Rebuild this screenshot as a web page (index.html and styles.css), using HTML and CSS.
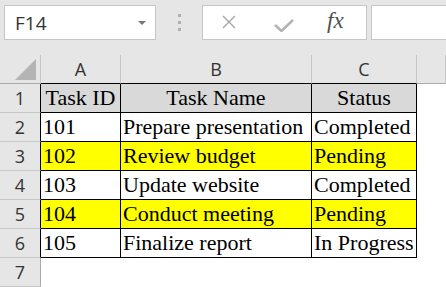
FILE: index.html
```html
<!DOCTYPE html>
<html>
<head lang="en">
    <meta charset="UTF-8">
    <title>Tasks</title>
    <link rel="stylesheet" href="styles.css">
</head>
<body>
<div class="toolbar">
    <div class="namebox">
        <span class="ref">F14</span>
        <span class="caret"></span>
    </div>
    <div class="grip"><i></i><i></i><i></i></div>
    <div class="fbuttons">
        <svg class="cancel" width="14" height="14" viewBox="0 0 14 14">
            <path d="M1 1L13 13M13 1L1 13" />
        </svg>
        <svg class="enter" width="20" height="13" viewBox="0 0 20 13">
            <path d="M1 6L7.5 12L19 1" />
        </svg>
        <span class="fx">fx</span>
    </div>
    <div class="fbox"></div>
</div>
<div class="sheet">
    <!-- column letters -->
    <div class="corner"><span class="tri"></span></div>
    <div class="colhead in">A</div>
    <div class="colhead in">B</div>
    <div class="colhead in">C</div>
    <div class="colhead"></div>

    <div class="rowhead in">1</div>
    <div class="cell th">Task ID</div>
    <div class="cell th">Task Name</div>
    <div class="cell th">Status</div>
    <div class="blank"></div>

    <div class="rowhead in">2</div>
    <div class="cell">101</div>
    <div class="cell">Prepare presentation</div>
    <div class="cell">Completed</div>
    <div class="blank"></div>

    <div class="rowhead in">3</div>
    <div class="cell hl">102</div>
    <div class="cell hl">Review budget</div>
    <div class="cell hl">Pending</div>
    <div class="blank"></div>

    <div class="rowhead in">4</div>
    <div class="cell">103</div>
    <div class="cell">Update website</div>
    <div class="cell">Completed</div>
    <div class="blank"></div>

    <div class="rowhead in">5</div>
    <div class="cell hl">104</div>
    <div class="cell hl">Conduct meeting</div>
    <div class="cell hl">Pending</div>
    <div class="blank"></div>

    <div class="rowhead in">6</div>
    <div class="cell">105</div>
    <div class="cell">Finalize report</div>
    <div class="cell">In Progress</div>
    <div class="blank"></div>

    <div class="rowhead">7</div>
    <div class="blank"></div>
    <div class="blank"></div>
    <div class="blank"></div>
    <div class="blank"></div>
</div>
</body>
</html>
```
FILE: styles.css
```css
*{
    margin:0;
    padding:0;
    box-sizing:border-box;
}
body{
    background:#fff;
    font-family:"Open Sans","Liberation Sans",sans-serif;
    overflow:hidden;
}
/* formula bar */
.toolbar{
    height:55px;
    background:#e6e6e6;
    display:flex;
    align-items:flex-start;
    padding:5px 0 0 4px;
}
.namebox{
    width:152px;
    height:35px;
    background:#fff;
    border:1px solid #c6c6c6;
    display:flex;
    align-items:center;
    justify-content:space-between;
    padding:0 9px 0 10px;
}
.ref{
    font-size:19px;
    color:#333;
}
.caret{
    width:0;
    height:0;
    border-left:4px solid transparent;
    border-right:4px solid transparent;
    border-top:4px solid #777;
    margin-top:1px;
}
.grip{
    width:46px;
    height:35px;
    display:flex;
    flex-direction:column;
    align-items:center;
    justify-content:center;
    gap:4px;
}
.grip i{
    width:3px;
    height:3px;
    background:#b0b0b0;
}
.fbuttons{
    width:165px;
    height:35px;
    background:#fff;
    border:1px solid #c6c6c6;
    display:flex;
    align-items:center;
    padding-left:19px;
}
.cancel{
    fill:none;
    stroke:#a6a6a6;
    stroke-width:1.4;
    margin-top:-2px;
}
.enter{
    fill:none;
    stroke:#b4b4b4;
    stroke-width:2.6;
    margin-left:38px;
    margin-top:6px;
}
.fx{
    font-family:"Liberation Serif",serif;
    font-style:italic;
    font-size:23px;
    color:#505050;
    margin-left:33px;
    margin-top:-3px;
}
.fbox{
    flex:1;
    height:35px;
    margin-left:4px;
    background:#fff;
    border:1px solid #c6c6c6;
    border-right:none;
}
/* grid */
.sheet{
    display:grid;
    grid-template-columns:41px 80px 191px 105px 1fr;
    grid-template-rows:29px;
    grid-auto-rows:29px;
}
.corner{
    background:#e6e6e6;
    border-right:1px solid #c6c6c6;
    border-bottom:1px solid #ababab;
    display:flex;
    justify-content:flex-end;
    align-items:flex-end;
    padding:0 4px 3px 0;
}
.tri{
    width:21px;
    height:21px;
    background:#b4b4b4;
    clip-path:polygon(100% 0,100% 100%,0 100%);
}
.colhead{
    background:#e6e6e6;
    border-right:1px solid #c6c6c6;
    border-bottom:1px solid #ababab;
    text-align:center;
    font-size:18px;
    line-height:28px;
    color:#333;
}
.colhead.in{
    border-bottom-color:#000;
}
.rowhead{
    background:#e6e6e6;
    border-right:1px solid #ababab;
    border-bottom:1px solid #c6c6c6;
    text-align:center;
    font-size:18px;
    line-height:28px;
    color:#333;
}
.rowhead.in{
    border-right-color:#000;
}
.cell{
    border-right:1px solid #000;
    border-bottom:1px solid #000;
    font-family:"Liberation Serif",serif;
    font-size:22px;
    line-height:28px;
    padding-left:2px;
    white-space:nowrap;
    overflow:hidden;
    color:#000;
}
.th{
    background:#d9d9d9;
    text-align:center;
    padding-left:0;
}
.hl{
    background:#ffff00;
}
.blank{
    background:#fff;
}
```
